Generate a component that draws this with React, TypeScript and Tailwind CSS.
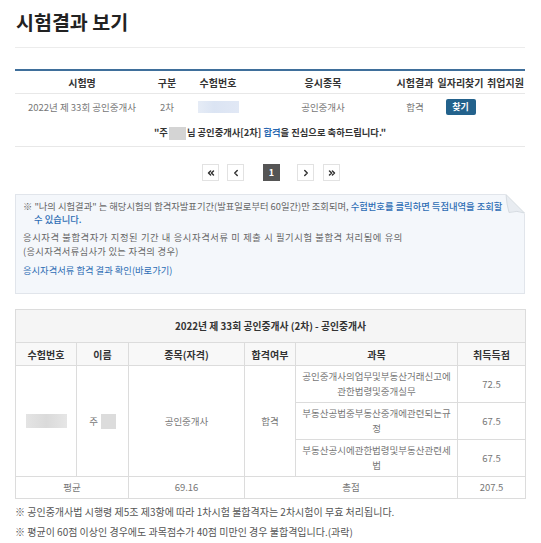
import React from "react";
import { ChevronLeft, ChevronRight, ChevronsLeft, ChevronsRight } from "lucide-react";

const font = "font-['Noto_Sans_CJK_KR','Noto_Sans',sans-serif]";

const head1 = ["시험명", "구분", "수험번호", "응시종목", "시험결과", "일자리찾기", "취업지원"];

const subjects = [
  { name: "공인중개사의업무및부동산거래신고에관한법령및중개실무", score: "72.5" },
  { name: "부동산공법중부동산중개에관련되는규정", score: "67.5" },
  { name: "부동산공시에관한법령및부동산관련세법", score: "67.5" },
];

function PageBox({ children, active }: { children: React.ReactNode; active?: boolean }) {
  return (
    <span
      className={
        active
          ? "flex h-[17px] w-[17px] items-center justify-center bg-[#555555] text-[9px] font-bold text-white"
          : "flex h-[17px] w-[17px] items-center justify-center border border-[#e2e2e2] bg-white text-[#333]"
      }
    >
      {children}
    </span>
  );
}

function FoldCorner() {
  return (
    <svg className="absolute -right-px -top-px" width="20" height="20" viewBox="0 0 20 20">
      <path d="M0 0 H20 V20 Z" fill="#ffffff" />
      <path
        d="M1 0.5 L19.5 19 Q 12 16 4 18.5 Q 1.5 10 1 0.5 Z"
        fill="#e8ecf1"
        stroke="#cfd5dc"
        strokeWidth="0.8"
      />
    </svg>
  );
}

export default function App() {
  return (
    <div className={`h-[543px] w-[541px] overflow-hidden bg-white text-[#333] ${font}`}>
      <div className="pl-[15px] pr-[16px]">
        <h1 className="pl-[1px] pt-[8px] text-[19.5px] font-bold leading-[28px] text-[#222]">시험결과 보기</h1>
        <div className="mt-[11px] border-t border-[#ececec]" />

        {/* 시험결과 목록 */}
        <div className="mt-[21px] border-t-2 border-[#3f6f9b]">
          <div className="grid h-[23px] grid-cols-[134px_36px_66px_144px_40px_51px_39px] items-center border-b border-[#e8e8e8] text-center text-[10px] font-bold text-[#333]">
            {head1.map((h) => (
              <span key={h} className="whitespace-nowrap">
                {h}
              </span>
            ))}
          </div>
          <div className="grid h-[26px] grid-cols-[134px_36px_66px_144px_40px_51px_39px] items-center text-center text-[9.5px] text-[#777]">
            <span>2022년 제 33회 공인중개사</span>
            <span>2차</span>
            <span className="flex justify-center">
              <span className="h-[12px] w-[41px] bg-[linear-gradient(90deg,#e6ecf6_0%,#dbe4f3_40%,#e1e8f5_100%)]" />
            </span>
            <span>공인중개사</span>
            <span>합격</span>
            <span className="flex justify-center">
              <span className="flex h-[16px] w-[30px] items-center justify-center rounded-[2px] bg-[#23628c] text-[9px] font-bold text-white">
                찾기
              </span>
            </span>
            <span />
          </div>
          <div className="flex h-[27px] items-center justify-center border-b border-[#e8e8e8] text-[9.3px] font-bold text-[#333]">
            <span>"주</span>
            <span className="mx-[1px] h-[13px] w-[17px] bg-[#d4d4d4]" />
            <span>
              님 공인중개사[2차] <span className="text-[#2767b0]">합격</span>을 진심으로 축하드립니다."
            </span>
          </div>
        </div>

        {/* 페이지 */}
        <div className="mt-[17px] flex justify-center pl-[2px]">
          <PageBox>
            <ChevronsLeft size={10} strokeWidth={3.5} />
          </PageBox>
          <span className="ml-[8px]" />
          <PageBox>
            <ChevronLeft size={10} strokeWidth={3.5} />
          </PageBox>
          <span className="ml-[19px]" />
          <PageBox active>1</PageBox>
          <span className="ml-[17px]" />
          <PageBox>
            <ChevronRight size={10} strokeWidth={3.5} />
          </PageBox>
          <span className="ml-[9px]" />
          <PageBox>
            <ChevronsRight size={10} strokeWidth={3.5} />
          </PageBox>
        </div>

        {/* 안내 */}
        <div className="relative mt-[13px] h-[100px] border border-[#e1e5eb] bg-[#f4f7fb] px-[7px] pt-[5px] text-[9.3px] text-[#666]">
          <FoldCorner />
          <p className="whitespace-nowrap leading-[13px]">
            ※ "나의 시험결과" 는 해당시험의 합격자발표기간(발표일로부터 60일간)만 조회되며,{" "}
            <span className="font-medium text-[#2d6db4]">수험번호를 클릭하면 득점내역을 조회할</span>
          </p>
          <p className="pl-[11px] font-medium leading-[13px] text-[#2d6db4]">수 있습니다.</p>
          <p className="mt-[4px] whitespace-nowrap leading-[14px] tracking-[0.6px]">
            응시자격 불합격자가 지정된 기간 내 응시자격서류 미 제출 시 필기시험 불합격 처리됨에 유의
          </p>
          <p className="leading-[14px] tracking-[0.3px]">(응시자격서류심사가 있는 자격의 경우)</p>
          <p className="mt-[5px] leading-[14px] text-[#2d6db4]">응시자격서류 합격 결과 확인(바로가기)</p>
        </div>

        {/* 득점내역 */}
        <table className="mt-[15px] w-[510px] table-fixed border-collapse border border-[#dcdcdc] text-center text-[9.5px] text-[#777]">
          <colgroup>
            <col className="w-[61px]" />
            <col className="w-[52px]" />
            <col className="w-[116px]" />
            <col className="w-[51px]" />
            <col className="w-[162px]" />
            <col className="w-[68px]" />
          </colgroup>
          <tbody>
            <tr className="h-[33px] bg-[#f5f5f5]">
              <td colSpan={6} className="border border-[#dcdcdc] text-[9.8px] font-bold text-[#333]">
                2022년 제 33회 공인중개사 (2차) - 공인중개사
              </td>
            </tr>
            <tr className="h-[23px] bg-[#f8f8f8] text-[10px] font-bold text-[#333]">
              <td className="border border-[#dcdcdc]">수험번호</td>
              <td className="border border-[#dcdcdc]">이름</td>
              <td className="border border-[#dcdcdc]">종목(자격)</td>
              <td className="border border-[#dcdcdc]">합격여부</td>
              <td className="border border-[#dcdcdc]">과목</td>
              <td className="border border-[#dcdcdc]">취득득점</td>
            </tr>
            {subjects.map((s, i) => (
              <tr key={s.name} className="h-[37px]">
                {i === 0 && (
                  <>
                    <td rowSpan={3} className="border border-[#dcdcdc]">
                      <span className="mx-auto block h-[14px] w-[41px] bg-[linear-gradient(90deg,#e4e4e4_0%,#dadada_50%,#e6e6e6_100%)]" />
                    </td>
                    <td rowSpan={3} className="border border-[#dcdcdc]">
                      <span className="inline-flex items-center">
                        주<span className="ml-[3px] h-[15px] w-[15px] bg-[#dcdcdc]" />
                      </span>
                    </td>
                    <td rowSpan={3} className="border border-[#dcdcdc]">
                      공인중개사
                    </td>
                    <td rowSpan={3} className="border border-[#dcdcdc]">
                      합격
                    </td>
                  </>
                )}
                <td className="break-all border border-[#dcdcdc] px-[5px] leading-[15px]">{s.name}</td>
                <td className="border border-[#dcdcdc]">{s.score}</td>
              </tr>
            ))}
            <tr className="h-[22px]">
              <td colSpan={2} className="border border-[#dcdcdc]">
                평균
              </td>
              <td className="border border-[#dcdcdc]">69.16</td>
              <td colSpan={2} className="border border-[#dcdcdc]">
                총점
              </td>
              <td className="border border-[#dcdcdc]">207.5</td>
            </tr>
          </tbody>
        </table>

        <p className="mt-[3px] whitespace-nowrap text-[10px] leading-[20px] text-[#555]">
          ※ 공인중개사법 시행령 제5조 제3항에 따라 1차시험 불합격자는 2차시험이 무효 처리됩니다.
        </p>
        <p className="whitespace-nowrap text-[10px] leading-[20px] text-[#555]">
          ※ 평균이 60점 이상인 경우에도 과목점수가 40점 미만인 경우 불합격입니다.(과락)
        </p>
      </div>
    </div>
  );
}
